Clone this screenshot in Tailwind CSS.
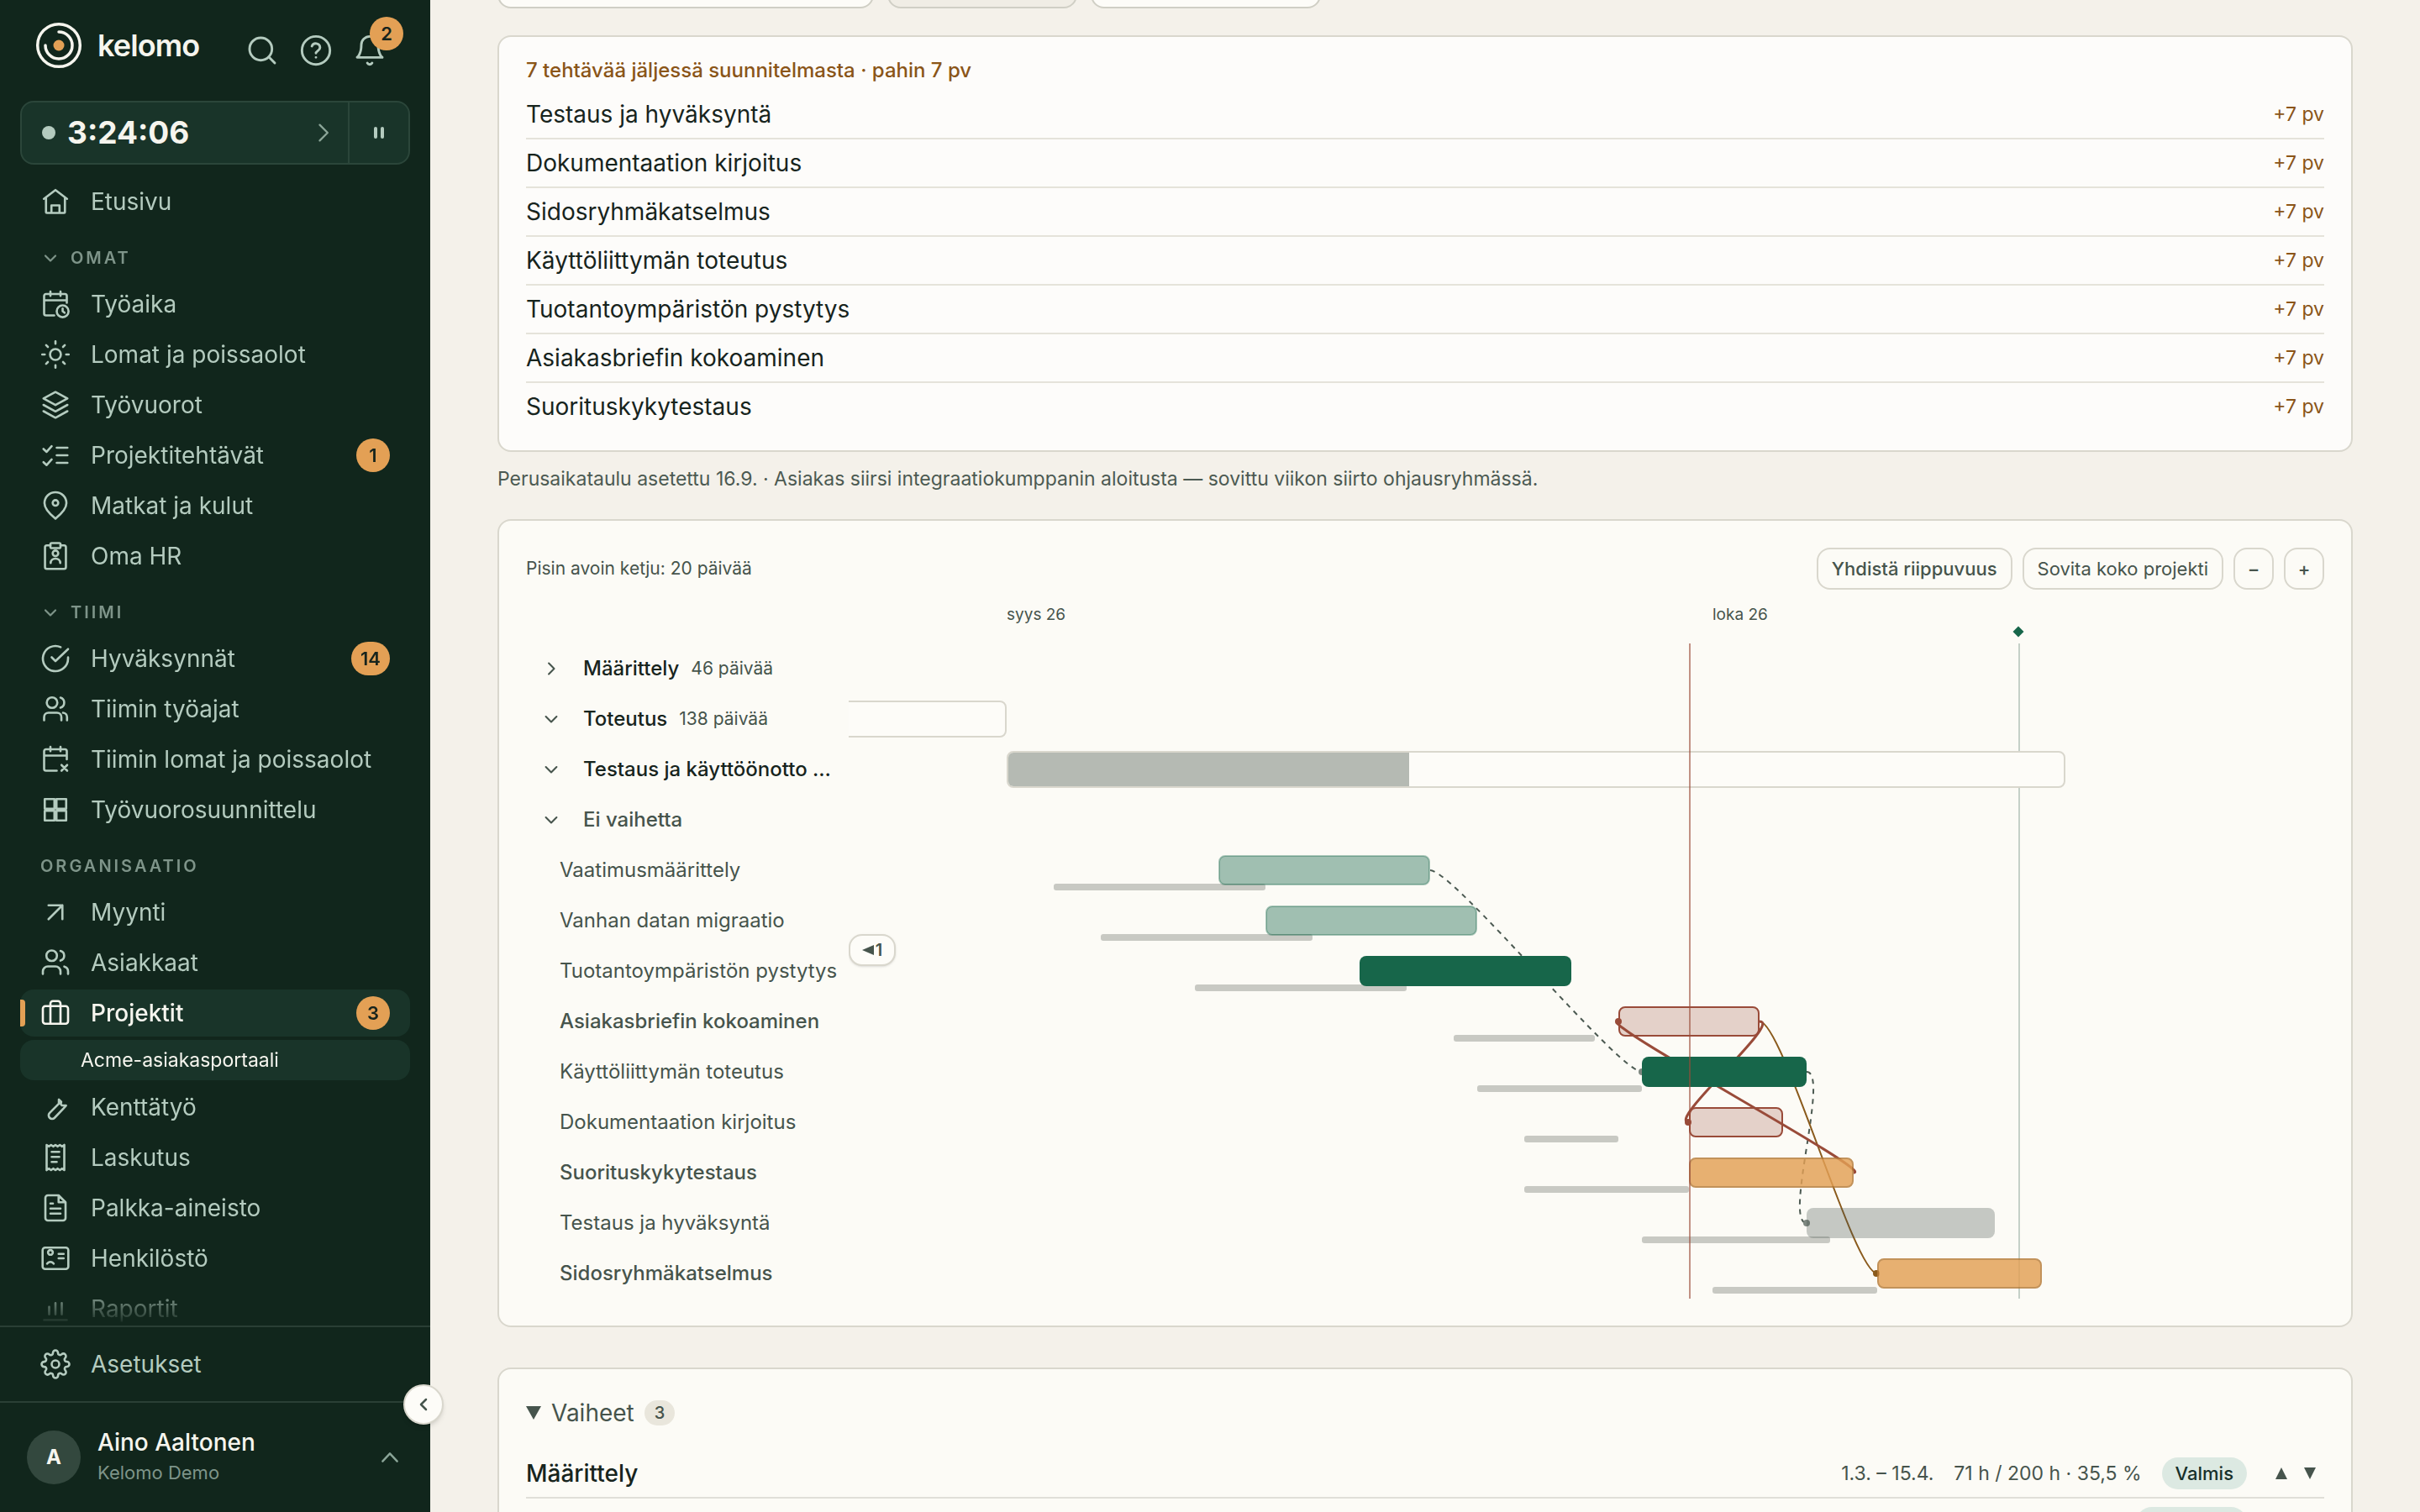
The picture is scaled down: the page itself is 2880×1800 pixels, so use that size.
<!DOCTYPE html>
<html lang="fi">
<head>
  <meta charset="UTF-8" />
  <meta name="viewport" content="width=device-width, initial-scale=1.0"/>
  <title>Projektit | kelomo</title>

  <script src="https://cdn.jsdelivr.net/npm/@tailwindcss/browser@4"></script>
</head>

<body class="h-screen overflow-hidden flex bg-[#f4f1ea] text-[#17241d] font-['Inter',sans-serif]">

  <!-- Sidebar -->
  <aside class="relative z-10 w-[512px] shrink-0 h-screen flex flex-col bg-[#11261c] text-[#b4cbbf]">
    <header class="h-[120px] shrink-0 flex items-start justify-between pl-[42px] pr-10">
      <a href="#" class="mt-[26px] h-14 flex items-center gap-[18px] text-[#f6f5ee]">
        <svg class="size-14" viewBox="0 0 56 56" fill="none" stroke="currentColor" stroke-width="3.5" stroke-linecap="round">
          <circle cx="28" cy="28" r="25.3"/>
          <path d="M28 12a16 16 0 1 1-16 16"/>
          <circle cx="28" cy="28" r="6.5" fill="#e3a055" stroke="none"/>
        </svg>
        <span class="text-[36px] leading-10 font-semibold tracking-tight">kelomo</span>
      </a>
      <div class="mt-10 flex">
        <button class="w-16 h-10 flex items-center justify-center" aria-label="Haku">
          <svg class="size-10" viewBox="0 0 24 24" fill="none" stroke="currentColor" stroke-width="1.75" stroke-linecap="round"><circle cx="11" cy="11" r="8"/><path d="m21 21-4.3-4.3"/></svg>
        </button>
        <button class="w-16 h-10 flex items-center justify-center" aria-label="Ohje">
          <svg class="size-10" viewBox="0 0 24 24" fill="none" stroke="currentColor" stroke-width="1.75" stroke-linecap="round" stroke-linejoin="round"><circle cx="12" cy="12" r="10"/><path d="M9.1 9a3 3 0 0 1 5.8 1c0 2-2.9 2.6-2.9 4M12 17h.01"/></svg>
        </button>
        <button class="relative w-16 h-10 flex items-center justify-center" aria-label="Ilmoitukset">
          <svg class="size-10" viewBox="0 0 24 24" fill="none" stroke="currentColor" stroke-width="1.75" stroke-linecap="round" stroke-linejoin="round"><path d="M6 8a6 6 0 0 1 12 0c0 7 3 9 3 9H3s3-2 3-9M10.3 21a1.94 1.94 0 0 0 3.4 0"/></svg>
          <span class="absolute -top-5 -right-2 size-10 rounded-full bg-[#e3a055] text-[#17241d] text-[22px] font-semibold flex items-center justify-center">2</span>
        </button>
      </div>
    </header>

    <div class="mx-6 h-[76px] shrink-0 flex rounded-2xl border-2 border-[#2b463a] bg-[#193429]">
      <button class="flex-1 flex items-center pl-6 pr-4">
        <span class="size-4 rounded-full bg-[#b4cbbf]"></span>
        <span class="ml-[14px] text-[37px] leading-10 font-bold text-[#f6f5ee]">3:24:06</span>
        <svg class="ml-auto size-7" viewBox="0 0 24 24" fill="none" stroke="#8ba598" stroke-width="2" stroke-linecap="round" stroke-linejoin="round"><path d="m9 4 8 8-8 8"/></svg>
      </button>
      <button class="w-[72px] border-l-2 border-[#2b463a] flex items-center justify-center gap-1" aria-label="Tauko">
        <span class="w-1 h-[14px] rounded-xs bg-[#b4cbbf]"></span>
        <span class="w-1 h-[14px] rounded-xs bg-[#b4cbbf]"></span>
      </button>
    </div>

    <nav class="flex-1 min-h-0 overflow-hidden px-6 pt-4 text-[28px] leading-9 [mask-image:linear-gradient(to_bottom,#000_calc(100%-52px),transparent)]">
      <a href="#" class="flex items-center gap-6 h-14 mb-1 px-6">
        <svg class="size-9" viewBox="0 0 24 24" fill="none" stroke="currentColor" stroke-width="1.75" stroke-linecap="round" stroke-linejoin="round"><path d="m2.8 9.8 9.2-7 9.2 7M4.5 9v11.2a.8.8 0 0 0 .8.8h13.4a.8.8 0 0 0 .8-.8V9M8.8 21v-6h6.4v6"/></svg>
        Etusivu
      </a>

      <button class="flex items-center gap-3 h-[62px] pt-2 px-6 text-[20px] font-semibold tracking-[3px] text-[#7e9489]">
        <svg class="size-6" viewBox="0 0 24 24" fill="none" stroke="currentColor" stroke-width="2.2" stroke-linecap="round" stroke-linejoin="round"><path d="m6 9.500 6 6 6-6"/></svg>
        OMAT
      </button>
      <a href="#" class="flex items-center gap-6 h-14 mb-1 px-6">
        <svg class="size-9" viewBox="0 0 24 24" fill="none" stroke="currentColor" stroke-width="1.75" stroke-linecap="round" stroke-linejoin="round"><path d="M21 11V5.500A1.500 1.500 0 0 0 19.500 4h-15A1.500 1.500 0 0 0 3 5.500v14A1.500 1.500 0 0 0 4.500 21H11M3 9h18M8 2v3.500M16 2v3.500M17.700 15.500v2.200l1.500 1.200"/><circle cx="17.700" cy="17.700" r="4.700"/></svg>
        Työaika
      </a>
      <a href="#" class="flex items-center gap-6 h-14 mb-1 px-6">
        <svg class="size-9" viewBox="0 0 24 24" fill="none" stroke="currentColor" stroke-width="1.75" stroke-linecap="round"><circle cx="12" cy="12" r="4.300"/><path d="M12 1.500v2M12 20.500v2M4.600 4.600 6 6M18 18l1.400 1.400M1.500 12h2M20.500 12h2M6 18l-1.400 1.400M19.400 4.600 18 6"/></svg>
        Lomat ja poissaolot
      </a>
      <a href="#" class="flex items-center gap-6 h-14 mb-1 px-6">
        <svg class="size-9" viewBox="0 0 24 24" fill="none" stroke="currentColor" stroke-width="1.75" stroke-linecap="round" stroke-linejoin="round"><path d="m12 1.800-9.500 5.100 9.500 5.200 9.500-5.200zM2.500 12l9.500 5.200 9.500-5.200M2.500 17l9.500 5.200 9.500-5.200"/></svg>
        Työvuorot
      </a>
      <a href="#" class="flex items-center gap-6 h-14 mb-1 px-6">
        <svg class="size-9" viewBox="0 0 24 24" fill="none" stroke="currentColor" stroke-width="1.75" stroke-linecap="round" stroke-linejoin="round"><path d="m2.500 7 2.500 2.300L9 4.800M2.500 17.500 5 19.800l4-4.500M13 6h8.500M13 12h8.500M13 18h8.500"/></svg>
        Projektitehtävät
        <span class="ml-auto h-10 min-w-10 px-[11px] rounded-full bg-[#e3a055] text-[#17241d] text-[22px] font-semibold flex items-center justify-center">1</span>
      </a>
      <a href="#" class="flex items-center gap-6 h-14 mb-1 px-6">
        <svg class="size-9" viewBox="0 0 24 24" fill="none" stroke="currentColor" stroke-width="1.75" stroke-linejoin="round"><path d="M12 22.300c-1.500-1.300-8.700-6.800-8.700-12.300a8.700 8.700 0 0 1 17.400 0c0 5.500-7.200 11-8.700 12.300z"/><circle cx="12" cy="9.800" r="2.200"/></svg>
        Matkat ja kulut
      </a>
      <a href="#" class="flex items-center gap-6 h-14 mb-1 px-6">
        <svg class="size-9" viewBox="0 0 24 24" fill="none" stroke="currentColor" stroke-width="1.75" stroke-linecap="round" stroke-linejoin="round"><path d="M8 3.500H5.200A1.500 1.500 0 0 0 3.700 5v15.700a1.500 1.500 0 0 0 1.500 1.500h13.600a1.500 1.500 0 0 0 1.500-1.500V5a1.500 1.500 0 0 0-1.500-1.500H16M8.200 17.500c0-2.200 1.600-3.500 3.800-3.500s3.800 1.300 3.800 3.500"/><rect x="8" y="1.700" width="8" height="4" rx="1"/><circle cx="12" cy="9.800" r="2.200"/></svg>
        Oma HR
      </a>

      <button class="flex items-center gap-3 h-[62px] pt-2 px-6 text-[20px] font-semibold tracking-[3px] text-[#7e9489]">
        <svg class="size-6" viewBox="0 0 24 24" fill="none" stroke="currentColor" stroke-width="2.2" stroke-linecap="round" stroke-linejoin="round"><path d="m6 9.500 6 6 6-6"/></svg>
        TIIMI
      </button>
      <a href="#" class="flex items-center gap-6 h-14 mb-1 px-6">
        <svg class="size-9" viewBox="0 0 24 24" fill="none" stroke="currentColor" stroke-width="1.75" stroke-linecap="round" stroke-linejoin="round"><path d="M22 11.100V12a10 10 0 1 1-5.900-9.100M22 4.500 12 14l-3-3"/></svg>
        Hyväksynnät
        <span class="ml-auto h-10 min-w-10 px-[11px] rounded-full bg-[#e3a055] text-[#17241d] text-[22px] font-semibold flex items-center justify-center">14</span>
      </a>
      <a href="#" class="flex items-center gap-6 h-14 mb-1 px-6">
        <svg class="size-9" viewBox="0 0 24 24" fill="none" stroke="currentColor" stroke-width="1.75" stroke-linecap="round"><circle cx="9.300" cy="7" r="4.200"/><path d="M3 21v-2.500A3.500 3.500 0 0 1 6.500 15h6.700a3.500 3.500 0 0 1 3.500 3.500V21M16 3a4.200 4.200 0 0 1 0 8M18 15a3.500 3.500 0 0 1 3.200 3.500V21"/></svg>
        Tiimin työajat
      </a>
      <a href="#" class="flex items-center gap-6 h-14 mb-1 px-6">
        <svg class="size-9" viewBox="0 0 24 24" fill="none" stroke="currentColor" stroke-width="1.75" stroke-linecap="round" stroke-linejoin="round"><path d="M21 12V5.500A1.500 1.500 0 0 0 19.500 4h-15A1.500 1.500 0 0 0 3 5.500v14A1.500 1.500 0 0 0 4.500 21H13M3 9h18M8 2v3.500M16 2v3.500M16.800 16.500l4.500 4.500M21.300 16.500 16.800 21"/></svg>
        Tiimin lomat ja poissaolot
      </a>
      <a href="#" class="flex items-center gap-6 h-14 mb-1 px-6">
        <svg class="size-9" viewBox="0 0 24 24" fill="none" stroke="currentColor" stroke-width="1.75" stroke-linejoin="round"><path d="M3.500 3.500h7.700v7.700H3.500zM12.800 3.500h7.700v7.700h-7.700zM3.500 12.800h7.700v7.700H3.500zM12.800 12.800h7.700v7.700h-7.700z"/></svg>
        Työvuorosuunnittelu
      </a>

      <h2 class="flex items-center h-[62px] pt-2 px-6 text-[20px] font-semibold tracking-[3px] text-[#7e9489]">ORGANISAATIO</h2>
      <a href="#" class="flex items-center gap-6 h-14 mb-1 px-6">
        <svg class="size-9" viewBox="0 0 24 24" fill="none" stroke="currentColor" stroke-width="1.75" stroke-linecap="round" stroke-linejoin="round"><path d="M6.500 17.500 17.500 6.500M6.500 6.500h11v11"/></svg>
        Myynti
      </a>
      <a href="#" class="flex items-center gap-6 h-14 mb-1 px-6">
        <svg class="size-9" viewBox="0 0 24 24" fill="none" stroke="currentColor" stroke-width="1.75" stroke-linecap="round"><circle cx="9" cy="6.500" r="4.200"/><path d="M16 21v-2a4 4 0 0 0-4-4H6a4 4 0 0 0-4 4v2M22 21v-2a4 4 0 0 0-3-3.900M16 2.700a4 4 0 0 1 0 7.700"/></svg>
        Asiakkaat
      </a>
      <a href="#" class="relative flex items-center gap-6 h-14 mb-1 px-6 rounded-2xl bg-[#193429] text-[#f6f5ee] font-medium" aria-current="page">
        <span class="absolute left-0 top-3 w-[6px] h-8 rounded-r-sm bg-[#e3a055]"></span>
        <svg class="size-9" viewBox="0 0 24 24" fill="none" stroke="currentColor" stroke-width="1.75" stroke-linejoin="round"><rect x="2" y="6.500" width="20" height="14" rx="2"/><path d="M16 20.500V4.500a2 2 0 0 0-2-2h-4a2 2 0 0 0-2 2v16"/></svg>
        Projektit
        <span class="ml-auto h-10 min-w-10 px-[11px] rounded-full bg-[#e3a055] text-[#17241d] text-[22px] font-semibold flex items-center justify-center">3</span>
      </a>
      <a href="#" class="flex items-center h-12 mb-1 pl-[72px] rounded-2xl bg-[#193429] text-[#f6f5ee] text-[23px]">Acme-asiakasportaali</a>
      <a href="#" class="flex items-center gap-6 h-14 mb-1 px-6">
        <svg class="size-9" viewBox="0 0 24 24" fill="none" stroke="currentColor" stroke-width="1.75" stroke-linecap="round" stroke-linejoin="round"><path d="M14.700 6v3.200L7.400 16.600a2.700 2.700 0 0 0 3.900 3.900l7.200-7.600 1.900-2.200h-3.200l-1-1.100.4-1.800z"/></svg>
        Kenttätyö
      </a>
      <a href="#" class="flex items-center gap-6 h-14 mb-1 px-6">
        <svg class="size-9" viewBox="0 0 24 24" fill="none" stroke="currentColor" stroke-width="1.75" stroke-linecap="round" stroke-linejoin="round"><path d="m5 2 1.700 1.200L8.500 2l1.700 1.200L12 2l1.800 1.200L15.500 2l1.800 1.200L19 2v20l-1.700-1.200-1.800 1.200-1.700-1.200L12 22l-1.800-1.200L8.500 22l-1.800-1.200L5 22zM9 7.500h6M9 11.500h6M9 15.500h4"/></svg>
        Laskutus
      </a>
      <a href="#" class="flex items-center gap-6 h-14 mb-1 px-6">
        <svg class="size-9" viewBox="0 0 24 24" fill="none" stroke="currentColor" stroke-width="1.75" stroke-linecap="round" stroke-linejoin="round"><path d="M14.500 2H6a2 2 0 0 0-2 2v16a2 2 0 0 0 2 2h12a2 2 0 0 0 2-2V7.500zM14.500 2v5.500H20M8 8.500h2M8 12.500h8M8 16.500h8"/></svg>
        Palkka-aineisto
      </a>
      <a href="#" class="flex items-center gap-6 h-14 mb-1 px-6">
        <svg class="size-9" viewBox="0 0 24 24" fill="none" stroke="currentColor" stroke-width="1.75" stroke-linecap="round" stroke-linejoin="round"><rect x="1.800" y="3.500" width="20.400" height="17" rx="2"/><circle cx="8" cy="7.300" r="1.900"/><path d="M5.400 16.300a3 3 0 0 1 5.200 0M14.500 8.500h4M14.500 12h4"/></svg>
        Henkilöstö
      </a>
      <a href="#" class="flex items-center gap-6 h-14 mb-1 px-6">
        <svg class="size-9" viewBox="0 0 24 24" fill="none" stroke="currentColor" stroke-width="1.75" stroke-linecap="round"><path d="M3 21h18M7 10.500V16.500M12 7.500v9M17 7.500v9"/></svg>
        Raportit
      </a>
    </nav>

    <div class="shrink-0 border-t-2 border-[#2a3f35] px-6 py-4 text-[28px] leading-9">
      <a href="#" class="flex items-center gap-6 h-14 px-6">
        <svg class="size-9" viewBox="0 0 24 24" fill="none" stroke="currentColor" stroke-width="1.75" stroke-linejoin="round"><circle cx="12" cy="12" r="3"/><path d="M19.4 15a1.65 1.65 0 0 0 .33 1.82l.06.06a2 2 0 0 1 0 2.83 2 2 0 0 1-2.83 0l-.06-.06a1.65 1.65 0 0 0-1.82-.33 1.65 1.65 0 0 0-1 1.51V21a2 2 0 0 1-2 2 2 2 0 0 1-2-2v-.09A1.65 1.65 0 0 0 9 19.4a1.65 1.65 0 0 0-1.82.33l-.06.06a2 2 0 0 1-2.83 0 2 2 0 0 1 0-2.83l.06-.06a1.65 1.65 0 0 0 .33-1.82 1.65 1.65 0 0 0-1.51-1H3a2 2 0 0 1-2-2 2 2 0 0 1 2-2h.09A1.65 1.65 0 0 0 4.6 9a1.65 1.65 0 0 0-.33-1.82l-.06-.06a2 2 0 0 1 0-2.83 2 2 0 0 1 2.83 0l.06.06a1.65 1.65 0 0 0 1.82.33H9a1.65 1.65 0 0 0 1-1.51V3a2 2 0 0 1 2-2 2 2 0 0 1 2 2v.09a1.65 1.65 0 0 0 1 1.51 1.65 1.65 0 0 0 1.82-.33l.06-.06a2 2 0 0 1 2.83 0 2 2 0 0 1 0 2.83l-.06.06a1.65 1.65 0 0 0-.33 1.82V9a1.65 1.65 0 0 0 1.51 1H21a2 2 0 0 1 2 2 2 2 0 0 1-2 2h-.09a1.65 1.65 0 0 0-1.51 1z"/></svg>
        Asetukset
      </a>
    </div>

    <button class="shrink-0 h-[132px] border-t-2 border-[#2a3f35] flex items-center gap-5 px-8 text-left">
      <span class="size-16 rounded-full bg-[#33483e] text-[#f6f5ee] text-[24px] font-bold flex items-center justify-center">A</span>
      <span class="flex flex-col">
        <span class="text-[28px] leading-9 font-medium text-[#f6f5ee]">Aino Aaltonen</span>
        <span class="text-[22px] leading-9 text-[#7e9489]">Kelomo Demo</span>
      </span>
      <svg class="ml-auto size-8" viewBox="0 0 24 24" fill="none" stroke="#8ba598" stroke-width="1.8" stroke-linecap="round" stroke-linejoin="round"><path d="m5.500 15.500 6.500-7 6.500 7"/></svg>
    </button>

    <button class="absolute -right-4 bottom-[104px] size-12 rounded-full border-2 border-[#d9d7cd] bg-[#fdfcf8] shadow-md flex items-center justify-center" aria-label="Pienennä valikko">
      <svg class="size-6" viewBox="0 0 24 24" fill="none" stroke="#46544c" stroke-width="2.5" stroke-linecap="round" stroke-linejoin="round"><path d="m15 6-6 6 6 6"/></svg>
    </button>
  </aside>

  <main class="flex-1 min-w-0 px-20">
    <!-- Toolbar, mostly scrolled out of view -->
    <div class="-mt-14 flex gap-4">
      <div class="w-[448px] h-[66px] rounded-2xl border-2 border-[#d0cfc5] bg-[#fdfcf8]"></div>
      <div class="w-[226px] h-[66px] rounded-2xl border-2 border-[#d0cfc5] bg-[#f0ede5]"></div>
      <div class="w-[274px] h-[66px] rounded-2xl border-2 border-[#d0cfc5] bg-[#fdfcf8]"></div>
    </div>

    <!-- Late tasks -->
    <section class="mt-8 px-8 py-6 rounded-2xl border-2 border-[#d9d7cd] bg-[#fdfcfa]">
      <h2 class="mb-2 text-[24px] leading-8 font-medium text-[#8a5518]">7 tehtävää jäljessä suunnitelmasta · pahin 7 pv</h2>
      <ul class="text-[28px] divide-y-2 divide-[#e5e3da]">
        <li class="flex items-center justify-between h-[58px]">Testaus ja hyväksyntä <span class="text-[23px] text-[#8a5518]">+7 pv</span></li>
        <li class="flex items-center justify-between h-[58px]">Dokumentaation kirjoitus <span class="text-[23px] text-[#8a5518]">+7 pv</span></li>
        <li class="flex items-center justify-between h-[58px]">Sidosryhmäkatselmus <span class="text-[23px] text-[#8a5518]">+7 pv</span></li>
        <li class="flex items-center justify-between h-[58px]">Käyttöliittymän toteutus <span class="text-[23px] text-[#8a5518]">+7 pv</span></li>
        <li class="flex items-center justify-between h-[58px]">Tuotantoympäristön pystytys <span class="text-[23px] text-[#8a5518]">+7 pv</span></li>
        <li class="flex items-center justify-between h-[58px]">Asiakasbriefin kokoaminen <span class="text-[23px] text-[#8a5518]">+7 pv</span></li>
        <li class="flex items-center justify-between h-14">Suorituskykytestaus <span class="text-[23px] text-[#8a5518]">+7 pv</span></li>
      </ul>
    </section>

    <p class="mt-2 mb-6 text-[23px] leading-[48px] text-[#4c5a52]">Perusaikataulu asetettu 16.9. · Asiakas siirsi integraatiokumppanin aloitusta — sovittu viikon siirto ohjausryhmässä.</p>

    <!-- Gantt -->
    <section class="p-8 rounded-2xl border-2 border-[#d9d7cd] bg-[#fcfbf6] text-[#46544c]">
      <div class="flex items-center gap-3 text-[22px]">
        <p class="mr-auto text-[21px]">Pisin avoin ketju: 20 päivää</p>
        <button class="h-[50px] px-4 rounded-2xl border-2 border-[#d9d7cd] font-medium">Yhdistä riippuvuus</button>
        <button class="h-[50px] px-4 rounded-2xl border-2 border-[#d9d7cd]">Sovita koko projekti</button>
        <button class="h-[50px] w-12 rounded-2xl border-2 border-[#d9d7cd] font-medium" aria-label="Loitonna">−</button>
        <button class="h-[50px] w-12 rounded-2xl border-2 border-[#d9d7cd] font-medium" aria-label="Lähennä">+</button>
      </div>

      <div class="flex">
        <ul class="w-[384px] shrink-0 pt-16 text-[24px] whitespace-nowrap">
          <li class="h-[60px] flex items-center pl-4">
            <button class="mr-6 size-7" aria-label="Avaa"><svg viewBox="0 0 24 24" fill="none" stroke="currentColor" stroke-width="1.75" stroke-linecap="round" stroke-linejoin="round"><path d="m9.500 6.500 5.500 5.500-5.500 5.500"/></svg></button>
            <span class="font-medium text-[#17241d]">Määrittely</span><span class="ml-[14px] text-[21px]">46 päivää</span>
          </li>
          <li class="h-[60px] flex items-center pl-4">
            <button class="mr-6 size-7" aria-label="Sulje"><svg viewBox="0 0 24 24" fill="none" stroke="currentColor" stroke-width="1.75" stroke-linecap="round" stroke-linejoin="round"><path d="m6.500 9.500 5.500 5.500 5.500-5.500"/></svg></button>
            <span class="font-medium text-[#17241d]">Toteutus</span><span class="ml-[14px] text-[21px]">138 päivää</span>
          </li>
          <li class="h-[60px] flex items-center pl-4">
            <button class="mr-6 size-7" aria-label="Sulje"><svg viewBox="0 0 24 24" fill="none" stroke="currentColor" stroke-width="1.75" stroke-linecap="round" stroke-linejoin="round"><path d="m6.500 9.500 5.500 5.500 5.500-5.500"/></svg></button>
            <span class="font-medium text-[#17241d]">Testaus ja käyttöönotto …</span>
          </li>
          <li class="h-[60px] flex items-center pl-4">
            <button class="mr-6 size-7" aria-label="Sulje"><svg viewBox="0 0 24 24" fill="none" stroke="currentColor" stroke-width="1.75" stroke-linecap="round" stroke-linejoin="round"><path d="m6.500 9.500 5.500 5.500 5.500-5.500"/></svg></button>
            <span class="font-medium">Ei vaihetta</span>
          </li>
          <li class="h-[60px] flex items-center pl-10">Vaatimusmäärittely</li>
          <li class="h-[60px] flex items-center pl-10">Vanhan datan migraatio</li>
          <li class="h-[60px] flex items-center pl-10">Tuotantoympäristön pystytys</li>
          <li class="h-[60px] flex items-center pl-10 font-medium">Asiakasbriefin kokoaminen</li>
          <li class="h-[60px] flex items-center pl-10">Käyttöliittymän toteutus</li>
          <li class="h-[60px] flex items-center pl-10">Dokumentaation kirjoitus</li>
          <li class="h-[60px] flex items-center pl-10 font-medium">Suorituskykytestaus</li>
          <li class="h-[60px] flex items-center pl-10">Testaus ja hyväksyntä</li>
          <li class="h-[60px] flex items-center pl-10 font-medium">Sidosryhmäkatselmus</li>
        </ul>

        <!-- Timeline: 28 px per day, 60 px per row, 64 px of month header -->
        <div class="relative flex-1 min-w-0 overflow-hidden">
          <svg class="block w-full h-[844px]" fill="none">
            <g fill="#46544c" font-size="19">
              <text x="188" y="36">syys 26</text>
              <text x="1028" y="36">loka 26</text>
            </g>
            <path d="M1392 43.500 1398.500 50 1392 56.500 1385.500 50z" fill="#17664a"/>
            <path d="M1393 64v780" stroke="#c5d0c8" stroke-width="2"/>

            <g transform="translate(0 64)">
              <!-- Phases -->
              <rect x="-20" y="69" width="207" height="42" rx="7" stroke="#d9d7cd" stroke-width="2" fill="#fdfcf8"/>
              <rect x="189" y="129" width="1258" height="42" rx="7" stroke="#d9d7cd" stroke-width="2" fill="#fdfcf8"/>
              <path d="M667 130v40H196a6 6 0 0 1-6-6v-28a6 6 0 0 1 6-6z" fill="#b5bab3"/>

              <!-- Baselines -->
              <g fill="#c8c9c3">
                <rect x="244" y="286" width="252" height="8" rx="3"/>
                <rect x="300" y="346" width="252" height="8" rx="3"/>
                <rect x="412" y="406" width="252" height="8" rx="3"/>
                <rect x="720" y="466" width="168" height="8" rx="3"/>
                <rect x="748" y="526" width="196" height="8" rx="3"/>
                <rect x="804" y="586" width="112" height="8" rx="3"/>
                <rect x="804" y="646" width="196" height="8" rx="3"/>
                <rect x="944" y="706" width="224" height="8" rx="3"/>
                <rect x="1028" y="766" width="196" height="8" rx="3"/>
              </g>

              <!-- Dependencies -->
              <g stroke="#4c5a52" stroke-width="2" stroke-dasharray="6 6">
                <path d="M692 270C720 270 916 510 944 510"/>
                <path d="M1140 510C1168 510 1112 690 1140 690"/>
              </g>
              <path d="M1084 450C1112 450 1196 750 1224 750" stroke="#8a5a1c" stroke-width="2"/>
              <g stroke="#994b39" stroke-width="3">
                <path d="M1196 630C1224 630 888 450 916 450"/>
                <path d="M1084 450C1112 450 972 570 1000 570"/>
              </g>
              <circle cx="944" cy="510" r="4" fill="#7d8780"/>
              <circle cx="1140" cy="690" r="4" fill="#7d8780"/>
              <circle cx="1223" cy="750" r="4" fill="#8a5a1c"/>
              <circle cx="916" cy="450" r="4" fill="#994b39"/>
              <circle cx="999" cy="570" r="4" fill="#994b39"/>

              <!-- Tasks -->
              <g fill="#17664a" fill-opacity=".4" stroke="#17664a" stroke-opacity=".35" stroke-width="2">
                <rect x="441" y="253" width="250" height="34" rx="7"/>
                <rect x="497" y="313" width="250" height="34" rx="7"/>
              </g>
              <g fill="#17664a">
                <rect x="608" y="372" width="252" height="36" rx="8"/>
                <rect x="944" y="492" width="196" height="36" rx="8"/>
              </g>
              <g fill="#994b39" fill-opacity=".24" stroke="#994b39" stroke-width="2">
                <rect x="917" y="433" width="166" height="34" rx="7"/>
                <rect x="1001" y="553" width="110" height="34" rx="7"/>
              </g>
              <g fill="#e3a055" stroke="#b67b38" stroke-width="2" opacity=".82">
                <rect x="1001" y="613" width="194" height="34" rx="7"/>
                <rect x="1225" y="733" width="194" height="34" rx="7"/>
              </g>
              <rect x="1140" y="672" width="224" height="36" rx="8" fill="#46544c" fill-opacity=".3"/>

              <path d="M1001 0v780" stroke="#994b39" stroke-opacity=".6" stroke-width="2"/>
            </g>
          </svg>
          <button class="absolute left-0 top-[410px] h-[38px] w-14 rounded-2xl border-2 border-[#d9d7cd] bg-[#fdfcf8] shadow text-[20px] font-semibold flex items-center justify-center gap-[2px]">
            <svg class="w-[14px] h-3" viewBox="0 0 14 12"><path d="M0 6 14 0v12z" fill="currentColor"/></svg>1
          </button>
        </div>
      </div>
    </section>

    <!-- Phases -->
    <section class="mt-12 p-8 rounded-2xl border-2 border-[#d9d7cd] bg-[#fcfbf6] text-[#46544c]">
      <button class="mb-6 h-10 flex items-center text-[28px]">
        <svg class="w-[18px] h-4 mr-3" viewBox="0 0 18 16"><path d="M0 0h18L9 16z" fill="currentColor"/></svg>
        Vaiheet
        <span class="ml-3 h-[30px] px-3 rounded-full bg-[#e9e6dc] text-[20px] font-medium flex items-center">3</span>
      </button>
      <ul class="text-[23px]">
        <li class="h-[58px] border-b-2 border-[#e0dfd8] flex items-center">
          <span class="mr-auto text-[28px] font-medium text-[#17241d]">Määrittely</span>
          <span>1.3. – 15.4.</span>
          <span class="ml-6">71 h / 200 h · 35,5 %</span>
          <span class="ml-6 h-[38px] px-4 rounded-full bg-[#dce9e2] text-[22px] font-medium text-[#17302a] flex items-center">Valmis</span>
          <button class="ml-8 w-[18px] flex justify-center" aria-label="Siirrä ylös"><svg class="size-[14px]" viewBox="0 0 14 14"><path d="M7 0 14 14H0z" fill="currentColor"/></svg></button>
          <button class="ml-4 mr-2 w-[18px] flex justify-center" aria-label="Siirrä alas"><svg class="size-[14px]" viewBox="0 0 14 14"><path d="M0 0h14L7 14z" fill="currentColor"/></svg></button>
        </li>
        <li class="h-[58px] flex items-center">
          <span class="mr-[92px] ml-auto h-[38px] w-[132px] rounded-full bg-[#dce9e2]"></span>
        </li>
      </ul>
    </section>
  </main>

</body>
</html>
